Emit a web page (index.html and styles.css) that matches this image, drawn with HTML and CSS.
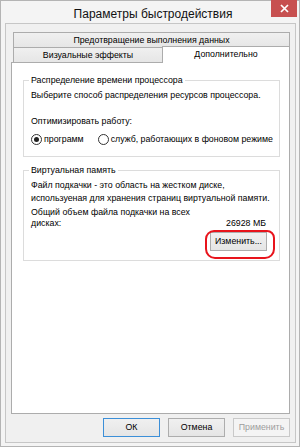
FILE: index.html
```html
<!DOCTYPE html>
<html lang="ru">
<head>
<meta charset="utf-8">
<title>Параметры быстродействия</title>
<link rel="stylesheet" href="styles.css">
</head>
<body>
<div class="window">
  <div class="titlebar">
    <div class="title">Параметры быстродействия</div>
    <div class="close">
      <svg width="9" height="9" viewBox="0 0 9 9"><path d="M1 1L8 8M8 1L1 8" stroke="#fff" stroke-width="1.7" fill="none"/></svg>
    </div>
  </div>
  <div class="client">
    <div class="tabstrip">
      <div class="tabrow">
        <div class="tab tab-top">Предотвращение выполнения данных</div>
      </div>
      <div class="tabrow">
        <div class="tab tab-vis">Визуальные эффекты</div>
        <div class="tab tab-sel">Дополнительно</div>
      </div>
    </div>
    <div class="panel">
      <fieldset class="group group-cpu">
        <legend>Распределение времени процессора</legend>
        <div class="line">Выберите способ распределения ресурсов процессора.</div>
        <div class="line line-opt">Оптимизировать работу:</div>
        <div class="radios">
          <div class="radio"><span class="dot checked"></span><span>программ</span></div>
          <div class="radio"><span class="dot"></span><span>служб, работающих в фоновом режиме</span></div>
        </div>
      </fieldset>
      <fieldset class="group group-vm">
        <legend>Виртуальная память</legend>
        <div class="line">Файл подкачки - это область на жестком диске,</div>
        <div class="line">используеная для хранения страниц виртуальной памяти.</div>
        <div class="total">
          <div class="total-label">Общий объем файла подкачки на всех<br>дисках:</div>
          <div class="total-value">26928 МБ</div>
        </div>
        <div class="change-row">
          <div class="change-wrap">
            <button class="btn btn-change">Изменить...</button>
            <div class="highlight"></div>
          </div>
        </div>
      </fieldset>
    </div>
    <div class="buttons">
      <button class="btn btn-default">ОК</button>
      <button class="btn">Отмена</button>
      <button class="btn btn-disabled">Применить</button>
    </div>
  </div>
</div>
</body>
</html>
```
FILE: styles.css
```css
* { box-sizing: border-box; }
html, body { margin: 0; padding: 0; background: #fff; }
body {
  font-family: "Liberation Sans", Arial, sans-serif;
  font-size: 8.8px;
  color: #000;
}
.window {
  width: 300px;
  height: 447px;
  border: 1px solid #b4b4b4;
  background: #f4f4f4;
  display: flex;
  flex-direction: column;
  padding: 0 3px 3px 4px;
}
.titlebar {
  height: 22px;
  margin: 0 -3px 0 -4px;
  display: flex;
  align-items: flex-start;
}
.title {
  flex: 1;
  text-align: center;
  font-size: 12px;
  line-height: 16px;
  padding: 5px 0 0 34px;
  color: #111;
}
.close {
  width: 26px;
  height: 17px;
  margin: -1px 2px 0 0;
  background: #c75050;
  display: flex;
  align-items: center;
  justify-content: center;
}
.close svg { display: block; }
.client {
  flex: 1;
  border: 1px solid #c6c6c6;
  background: #f0f0f0;
  display: flex;
  flex-direction: column;
  padding: 8px 5px 0 5px;
}
.tabstrip {
  display: flex;
  flex-direction: column;
  padding-left: 2px;
}
.tabrow { display: flex; }
.tab {
  border: 1px solid #acacac;
  background: linear-gradient(#f0f0f0, #e6e6e6);
  text-align: center;
  line-height: 13px;
  white-space: nowrap;
}
.tab-top {
  width: 277px;
  height: 16px;
  padding-top: 1px;
}
.tab-vis {
  width: 150px;
  height: 14px;
  border-top: none;
  border-bottom: none;
  padding-top: 1px;
}
.tab-sel {
  width: 128px;
  height: 17px;
  margin: -2px 0 -1px -1px;
  background: #fff;
  border-bottom: none;
  position: relative;
  z-index: 1;
  padding-top: 1px;
}
.panel {
  width: 279px;
  height: 352px;
  border: 1px solid #acacac;
  background: #fff;
  padding: 0 0 0 11px;
}
.group {
  width: 257px;
  margin: 11px 0 0 0;
  border: 1px solid #dcdcdc;
  padding: 0 13px 0 7px;
  min-width: 0;
}
.group legend {
  padding: 0 2px;
  margin-left: -2px;
  line-height: 13px;
}
.line { line-height: 13px; white-space: nowrap; }
.group-cpu { padding-bottom: 10px; }
.group-cpu .line:first-of-type { margin-top: 2px; }
.line-opt { margin-top: 13px; }
.radios {
  display: flex;
  margin-top: 5px;
  line-height: 13px;
  white-space: nowrap;
}
.radio { display: flex; align-items: center; flex-shrink: 0; }
.radio + .radio { margin-left: 14px; }
.dot {
  width: 11px;
  height: 11px;
  border: 1px solid #333;
  border-radius: 50%;
  background: #fff;
  margin-right: 2px;
  display: flex;
  align-items: center;
  justify-content: center;
  flex-shrink: 0;
}
.dot.checked::after {
  content: "";
  width: 5px;
  height: 5px;
  border-radius: 50%;
  background: #222;
}
.group-vm { margin-top: 7px; padding-bottom: 9px; }
.group-vm .line:first-of-type { margin-top: 2px; }
.total {
  display: flex;
  justify-content: space-between;
  align-items: flex-end;
  margin-top: 2px;
  line-height: 11px;
}
.change-row {
  display: flex;
  justify-content: flex-end;
  margin-top: 3px;
  margin-right: -1px;
}
.change-wrap { position: relative; }
.btn {
  font-family: inherit;
  font-size: 8.8px;
  color: #000;
  height: 19px;
  width: 57px;
  padding: 0;
  border: 1px solid #adadad;
  background: linear-gradient(#f0f0f0, #e5e5e5);
  line-height: 17px;
  text-align: center;
  margin: 0;
}
.btn-change { display: block; }
.highlight {
  position: absolute;
  left: -5px;
  top: -2px;
  width: 70px;
  height: 29px;
  border: 2px solid #e8141c;
  border-radius: 9px 8px 10px 10px;
}
.buttons {
  display: flex;
  justify-content: flex-end;
  gap: 8px;
  margin-top: 4px;
}
.btn-default { border-color: #3c8fd8; }
.btn-disabled {
  color: #9d9d9d;
  border-color: #c9c9c9;
  background: #f4f4f4;
}
```
